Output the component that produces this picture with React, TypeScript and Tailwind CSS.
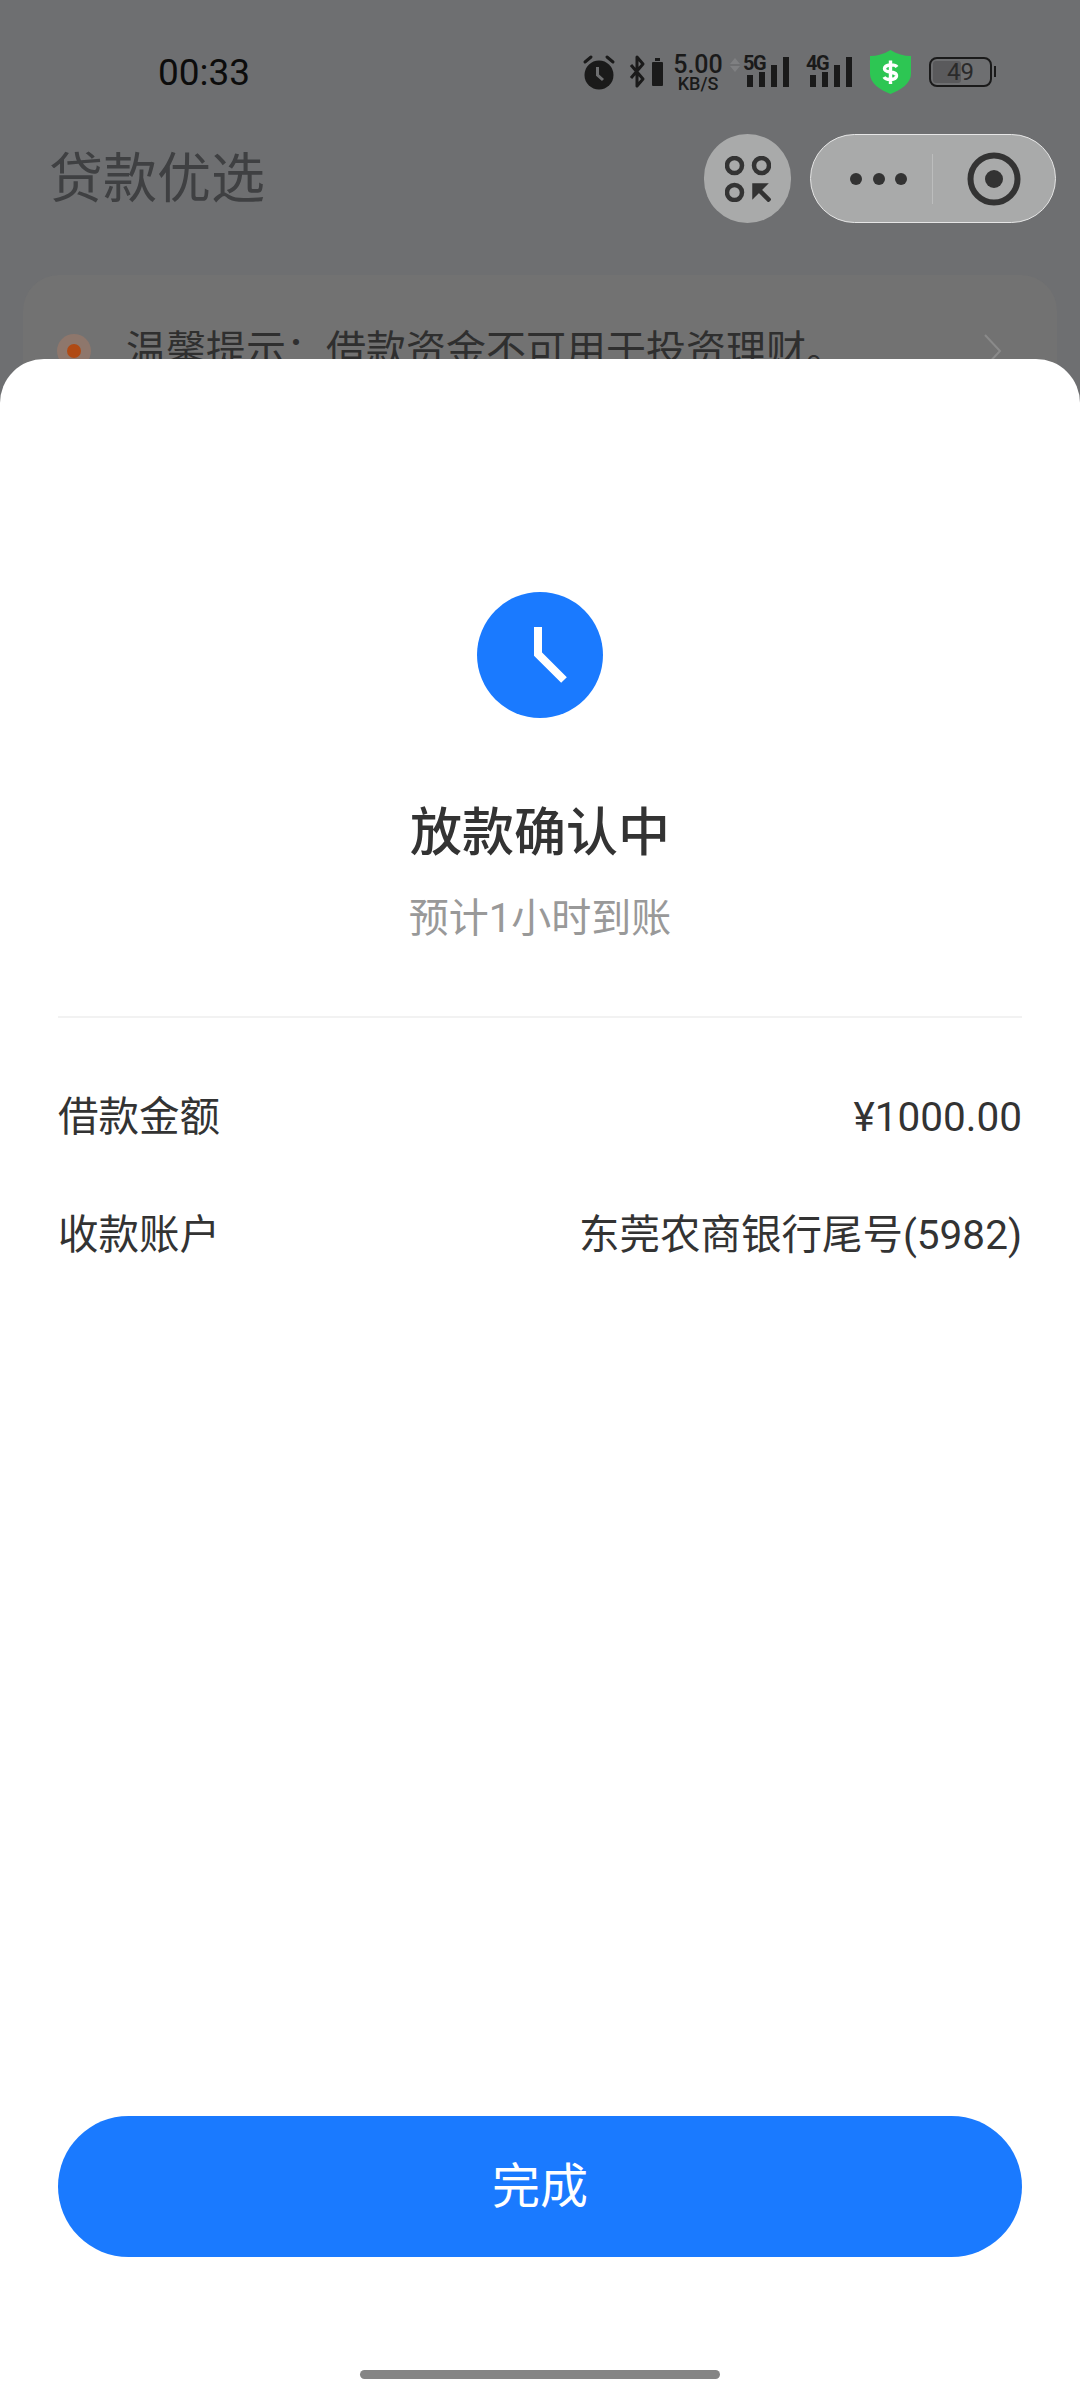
import React from 'react';

const font = { fontFamily: 'Roboto, "Noto Sans CJK SC", sans-serif' };

const SignalBars = () => (
  <svg width="43" height="32" viewBox="0 0 43 32" className="absolute left-[4px] top-[3px]" fill="#1a1a1a">
    <rect x="0" y="18" width="6" height="12" />
    <rect x="12" y="15" width="6" height="15" />
    <rect x="24" y="8" width="6" height="22" />
    <rect x="36" y="0" width="6" height="30" />
  </svg>
);

const StatusIcons = () => (
  <div className="flex items-center h-[44px] ml-auto mr-[88px] text-[#1a1a1a]">
    {/* alarm */}
    <svg width="34" height="36" viewBox="0 0 34 36">
      <circle cx="17" cy="21" r="14.5" fill="#1a1a1a" />
      <path d="M3 8 L9 3 M31 8 L25 3" stroke="#1a1a1a" strokeWidth="3" strokeLinecap="round" />
      <path d="M15.5 13 V21 L21 26" stroke="#6e6f71" strokeWidth="3" fill="none" />
    </svg>
    {/* bluetooth + little battery */}
    <svg width="36" height="36" viewBox="0 0 36 36" className="ml-[13px]">
      <path d="M2 11 L14 25 L8 32 V3 L14 10 L2 24" stroke="#1a1a1a" strokeWidth="3" fill="none" strokeLinejoin="round" />
      <rect x="23" y="8" width="11" height="24" rx="1" fill="#1a1a1a" />
      <rect x="26" y="4" width="5" height="3" fill="#1a1a1a" />
    </svg>
    <div className="flex flex-col items-center ml-[8px] w-[50px] pt-[4px] font-medium">
      <span className="text-[25px] leading-[20px]">5.00</span>
      <span className="text-[18px] leading-[18px]">KB/S</span>
    </div>
    <svg width="12" height="14" viewBox="0 0 12 14" className="ml-[6px] mb-[14px]" fill="#7f8082">
      <path d="M6 0 L11 6 H1 Z M6 14 L11 8 H1 Z" />
    </svg>
    <div className="relative w-[47px] h-[36px] ml-[2px]">
      <span className="absolute left-0 top-0 text-[20px] leading-[18px] font-bold tracking-[-1.5px]">5G</span>
      <SignalBars />
    </div>
    <div className="relative w-[47px] h-[36px] ml-[16px]">
      <span className="absolute left-0 top-0 text-[20px] leading-[18px] font-bold tracking-[-1.5px]">4G</span>
      <SignalBars />
    </div>
    {/* shield */}
    <svg width="41" height="44" viewBox="0 0 41 44" className="ml-[17px]">
      <path d="M20.5 0 C27 4 34 6 41 6 V24 C41 33 31 40 20.5 44 C10 40 0 33 0 24 V6 C7 6 14 4 20.5 0 Z" fill="#2dc653" />
      <path d="M27 17 C25 14 15 14 14.5 18.5 C14 24 27 20 26.5 26 C26 30.5 16 30.5 14 27 M20.5 10.5 V34" stroke="#fff" strokeWidth="3.4" fill="none" />
    </svg>
    {/* battery */}
    <div className="relative flex items-center justify-center w-[63px] h-[30px] ml-[18px] border-[2.5px] border-[#1a1a1a] rounded-[8px]">
      <div className="absolute left-[2px] top-[2px] bottom-[2px] w-[28px] bg-[#5a5a5c] rounded-[3px]" />
      <span className="relative text-[24px] leading-none text-[#2a2a2a]">49</span>
      <div className="absolute right-[-6px] top-[7px] w-[2.5px] h-[11px] bg-[#1a1a1a]" />
    </div>
  </div>
);

const Background = () => (
  <div>
    <div className="flex items-center h-[44px] mt-[50px] mb-[40px] pl-[158px]">
      <span className="text-[37px] leading-none text-[#0c0c0c]">00:33</span>
      <StatusIcons />
    </div>
    <div className="flex items-center h-[89px] pl-[49px] pr-[24px]">
      <span className="text-[54px] leading-none mt-[2px] text-[#3f4042]">贷款优选</span>
      <div className="flex items-center justify-center w-[87px] h-[89px] ml-auto rounded-full bg-[#a9aaaa]">
        <svg width="46" height="46" viewBox="0 0 46 46" fill="none" stroke="#333" strokeWidth="4.5">
          <circle cx="9.5" cy="9.5" r="7.5" />
          <circle cx="36.5" cy="9.5" r="7.5" />
          <circle cx="9.5" cy="36.5" r="7.5" />
          <path d="M30 30 L45 45" />
          <path d="M28 28 H42 L28 42 Z" fill="#333" strokeWidth="1.5" />
        </svg>
      </div>
      <div className="flex items-center w-[246px] h-[89px] ml-[19px] rounded-full bg-[#a9aaaa] border-[1.5px] border-[#e6e6e6]">
        <div className="flex items-center gap-[10.5px] ml-[39px]">
          <div className="w-[12px] h-[12px] rounded-full bg-[#333]" />
          <div className="w-[12px] h-[12px] rounded-full bg-[#333]" />
          <div className="w-[12px] h-[12px] rounded-full bg-[#333]" />
        </div>
        <div className="w-px h-[50px] ml-[25px] bg-[#bcbdbd]" />
        <svg width="54" height="54" viewBox="0 0 54 54" className="ml-[34px]">
          <circle cx="27" cy="27" r="23.5" fill="none" stroke="#333" strokeWidth="6" />
          <circle cx="27" cy="27" r="9" fill="#333" />
        </svg>
      </div>
    </div>
    <div className="flex items-center h-[152px] mt-[52px] mx-[23px] pl-[34px] pr-[55px] rounded-[36px] bg-[#727272]">
      <div className="flex items-center justify-center w-[34px] h-[34px] rounded-full bg-[#8e776c]">
        <div className="w-[14px] h-[14px] rounded-full bg-[#b04a14]" />
      </div>
      <span className="ml-[35px] text-[40px] leading-none text-[#2f2f2f]">温馨提示：借款资金不可用于投资理财。</span>
      <svg width="18" height="36" viewBox="0 0 18 36" className="ml-auto" fill="none" stroke="#8a8a8a" strokeWidth="2">
        <path d="M1 2 L16 18 L1 34" />
      </svg>
    </div>
  </div>
);

const Row = ({ label, value }: { label: string; value: string }) => (
  <div className="flex items-center justify-between h-[118px] text-[40.5px] leading-none text-[#333]">
    <span>{label}</span>
    <span>{value}</span>
  </div>
);

export default function App() {
  return (
    <div className="relative w-[1080px] h-[2400px] overflow-hidden bg-[#6e6f71]" style={font}>
      <Background />

      {/* bottom sheet */}
      <div className="absolute left-0 right-0 bottom-0 h-[2041px] flex flex-col items-center px-[58px] bg-white rounded-t-[44px]">
        <div className="flex items-center justify-center w-[126px] h-[126px] mt-[233px] rounded-full bg-[#1a7aff]">
          <svg width="126" height="126" viewBox="0 0 126 126" fill="none" stroke="#fff" strokeWidth="8">
            <path d="M61 35 V62 L87 88" />
          </svg>
        </div>
        <h1 className="mt-[80px] text-[52px] leading-[72px] font-medium text-[#333]">放款确认中</h1>
        <p className="mt-[25px] text-[40px] leading-[48px] text-[#999]">预计1小时到账</p>

        <div className="w-full h-[2px] mt-[73px] bg-[#f2f2f2]" />
        <div className="w-full mt-[40px]">
          <Row label="借款金额" value="¥1000.00" />
          <Row label="收款账户" value="东莞农商银行尾号(5982)" />
        </div>

        <button className="w-full h-[141px] mt-auto rounded-full bg-[#1a7aff] text-[48px] text-white">完成</button>
        <div className="w-[360px] h-[9px] mt-[113px] mb-[21px] rounded-full bg-[#858585]" />
      </div>
    </div>
  );
}
